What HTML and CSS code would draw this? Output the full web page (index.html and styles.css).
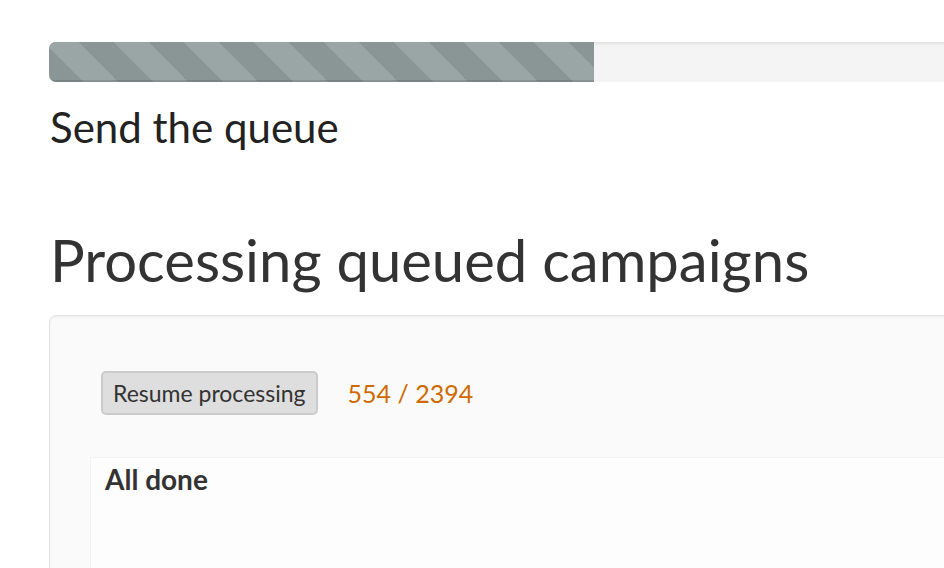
FILE: index.html
```html
<!DOCTYPE html>
<html lang="en">
<head>
  <meta charset="UTF-8" />
  <meta name="viewport" content="width=device-width, initial-scale=1.0" />
  <title>Send the queue</title>
  <link rel="stylesheet" href="styles.css">
</head>
<body>
  <div class="page">
    <div class="progress">
      <div class="bar" style="width: 545px;"></div>
    </div>
    <h3 class="subtitle">Send the queue</h3>

    <h1 class="title">Processing queued campaigns</h1>

    <div class="well">
      <div class="actions">
        <button class="btn">Resume processing</button>
        <span class="count">554 / 2394</span>
      </div>
      <div class="log">
        <strong>All done</strong>
      </div>
    </div>
  </div>
</body>
</html>
```

FILE: styles.css
```css
/* Base */
body {
  margin: 0;
  overflow: hidden;
  font-family: Lato, "Open Sans", sans-serif;
  color: #333;
  background: #fff;
}

.page {
  width: 1100px;
  height: 526px;
  padding: 42px 0 0 49px;
  overflow: hidden;
}

/* Progress bar */
.progress {
  height: 40px;
  background-color: #f4f4f4;
  border-radius: 7px;
  box-shadow: inset 0 2px 3px rgba(0, 0, 0, 0.08);
  overflow: hidden;
}
.progress .bar {
  height: 100%;
  background-color: #8a9696;
  background-image: linear-gradient(45deg, #9aa6a5 25%, transparent 25%, transparent 50%, #9aa6a5 50%, #9aa6a5 75%, transparent 75%, transparent);
  background-size: 70px 70px;
  background-position: -6px 0;
  box-shadow: inset 0 -2px 0 rgba(0, 0, 0, 0.12);
}

/* Headings */
.subtitle {
  margin: 20px 0 0 1px;
  font-size: 42px;
  font-weight: 400;
  line-height: 50px;
  color: #222;
}
.title {
  margin: 68px 0 0 1px;
  font-size: 58px;
  font-weight: 400;
  line-height: 80px;
  color: #333;
}

/* Well */
.well {
  margin-top: 15px;
  padding: 55px 0 0 40px;
  height: 300px;
  background: #fafafa;
  border: 1px solid #e2e2e2;
  border-radius: 7px;
  box-shadow: inset 0 2px 2px rgba(0, 0, 0, 0.04);
}

.actions {
  display: flex;
  align-items: center;
  gap: 30px;
  padding-left: 11px;
}

.btn {
  height: 44px;
  padding: 0 10px;
  font-family: inherit;
  font-size: 23px;
  color: #333;
  background: #dedede;
  border: 2px solid #cbcbcb;
  border-radius: 5px;
}

.count {
  font-size: 25px;
  color: #d06a00;
}

.log {
  margin-top: 42px;
  padding: 4px 14px;
  height: 200px;
  background: #fdfdfd;
  border-top: 1px solid #f2f2f2;
  border-left: 1px solid #f2f2f2;
}
.log strong {
  font-size: 28px;
  font-weight: 700;
  color: #333;
}
```
